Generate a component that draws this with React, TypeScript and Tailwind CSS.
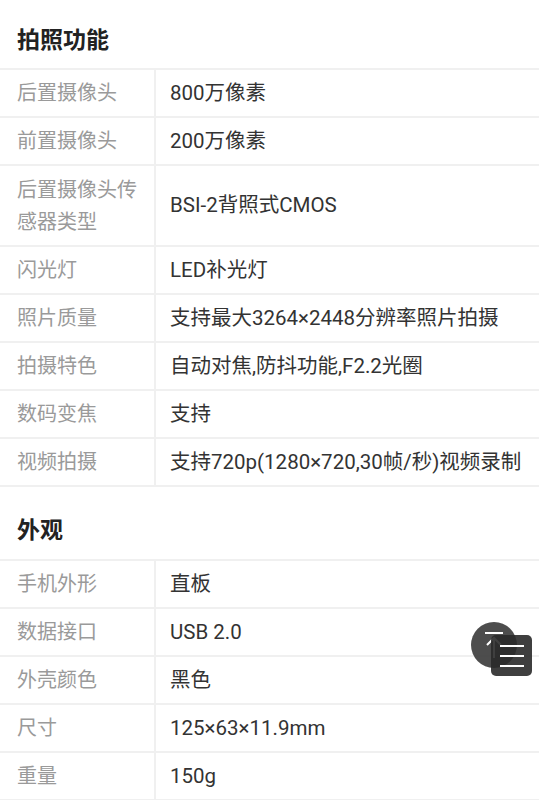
const sections: { title: string; head: string; rows: [string[], string][] }[] = [
  {
    title: "拍照功能",
    head: "h-[68px] pb-[16px]",
    rows: [
      [["后置摄像头"], "800万像素"],
      [["前置摄像头"], "200万像素"],
      [["后置摄像头传", "感器类型"], "BSI-2背照式CMOS"],
      [["闪光灯"], "LED补光灯"],
      [["照片质量"], "支持最大3264×2448分辨率照片拍摄"],
      [["拍摄特色"], "自动对焦,防抖功能,F2.2光圈"],
      [["数码变焦"], "支持"],
      [["视频拍摄"], "支持720p(1280×720,30帧/秒)视频录制"],
    ],
  },
  {
    title: "外观",
    head: "h-[72px] pb-[17px]",
    rows: [
      [["手机外形"], "直板"],
      [["数据接口"], "USB 2.0"],
      [["外壳颜色"], "黑色"],
      [["尺寸"], "125×63×11.9mm"],
      [["重量"], "150g"],
    ],
  },
];

function SpecRow({ label, value }: { label: string[]; value: string }) {
  const tall = label.length > 1;
  return (
    <div className="flex border-b-2 border-[#f0f0f0]">
      <div
        className={`flex w-[156px] shrink-0 flex-col justify-center border-r-2 border-[#f0f0f0] pl-[17px] text-[20px] text-[#9a9a9a] ${
          tall ? "h-[79px] leading-[32px]" : "h-[46px]"
        }`}
      >
        {label.map((l) => (
          <span key={l}>{l}</span>
        ))}
      </div>
      <div className="flex items-center whitespace-nowrap pl-[14px] text-[20.5px] text-[#333]">{value}</div>
    </div>
  );
}

export default function App() {
  return (
    <div className="relative h-[800px] w-[539px] overflow-hidden bg-white font-['Roboto','Noto_Sans_CJK_SC',sans-serif]">
      {sections.map((s) => (
        <div key={s.title}>
          {/* section heading */}
          <div className={`flex items-end px-[17px] ${s.head}`}>
            <h2 className="text-[23px] font-bold leading-none text-[#222]">{s.title}</h2>
          </div>
          <div className="border-t-2 border-[#f0f0f0]">
            {s.rows.map(([label, value]) => (
              <SpecRow key={label.join("")} label={label} value={value} />
            ))}
          </div>
        </div>
      ))}

      {/* floating buttons */}
      <div className="absolute left-[471px] top-[622px] flex h-[46px] w-[46px] items-start justify-center rounded-full bg-[#3a3a3a]/90">
        <svg width="24" height="30" viewBox="0 0 24 30" className="mt-[8px]" fill="none" stroke="#fff" strokeWidth="2">
          <path d="M3 3h18" />
          <path d="M12 8v20M5 15l7-7 7 7" />
        </svg>
      </div>
      <div className="absolute left-[491px] top-[635px] flex h-[41px] w-[41px] flex-col items-center justify-center gap-[8px] rounded-[5px] bg-[#2a2a2a]/90">
        <span className="h-[2px] w-[24px] bg-white" />
        <span className="h-[2px] w-[24px] bg-white" />
        <span className="h-[2px] w-[24px] bg-white" />
      </div>
    </div>
  );
}
